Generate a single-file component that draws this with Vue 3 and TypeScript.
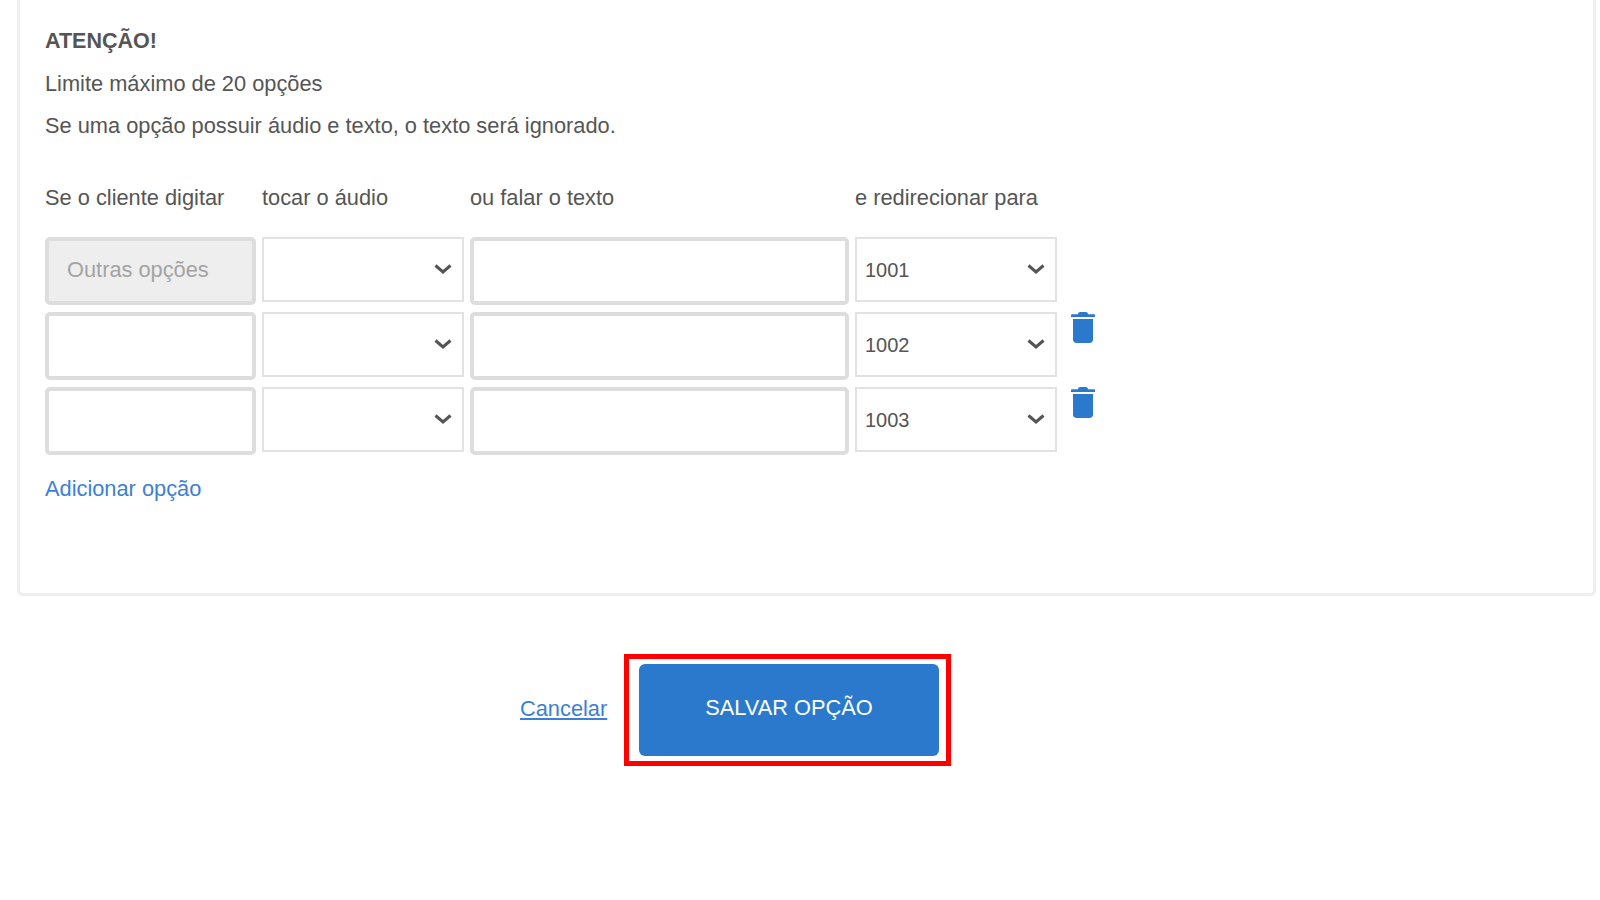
<script setup lang="ts">
interface OptionRow {
  key: string;
  target: string;
  locked: boolean;
}

const rows: OptionRow[] = [
  { key: 'Outras opções', target: '1001', locked: true },
  { key: '', target: '1002', locked: false },
  { key: '', target: '1003', locked: false },
];
</script>

<template>
  <div class="page">
    <section class="panel">
      <h2 class="title">ATENÇÃO!</h2>
      <p class="note">Limite máximo de 20 opções</p>
      <p class="note">Se uma opção possuir áudio e texto, o texto será ignorado.</p>

      <div class="grid">
        <span class="head">Se o cliente digitar</span>
        <span class="head">tocar o áudio</span>
        <span class="head">ou falar o texto</span>
        <span class="head">e redirecionar para</span>
        <span></span>

        <template v-for="row in rows" :key="row.target">
          <input class="field" :class="{ locked: row.locked }" :value="row.key" :disabled="row.locked" type="text" />
          <div class="select">
            <svg class="chevron" viewBox="0 0 18 10" width="18" height="10" aria-hidden="true">
              <path d="M1.500 1.500 9 8l7.500-6.500" fill="none" stroke="#555" stroke-width="3" />
            </svg>
          </div>
          <input class="field" type="text" />
          <div class="select">
            <span class="value">{{ row.target }}</span>
            <svg class="chevron" viewBox="0 0 18 10" width="18" height="10" aria-hidden="true">
              <path d="M1.500 1.500 9 8l7.500-6.500" fill="none" stroke="#555" stroke-width="3" />
            </svg>
          </div>
          <div class="action">
            <svg v-if="!row.locked" class="trash" viewBox="0 0 24 31" width="24" height="31" aria-hidden="true">
              <path d="M7 2.200C7 .8 8 0 9.500 0h5C16 0 17 .8 17 2.200h6c.6 0 1 .4 1 .9v1.900H0V3.100c0-.5.4-.9 1-.9z" fill="#2b79cd" />
              <path d="M2 7h20v20.500c0 2-1.500 3.500-3.500 3.500h-13C3.500 31 2 29.500 2 27.500z" fill="#2b79cd" />
            </svg>
          </div>
        </template>
      </div>

      <a class="add" href="#">Adicionar opção</a>
    </section>

    <footer class="footer">
      <a class="cancel" href="#">Cancelar</a>
      <div class="highlight">
        <button class="save" type="button">SALVAR OPÇÃO</button>
      </div>
    </footer>
  </div>
</template>

<style>
body {
  background: #fff;
}
</style>

<style scoped>
.page {
  width: 1600px;
  height: 900px;
  overflow: hidden;
  font-family: "Liberation Sans", Arial, sans-serif;
  font-size: 21.8px;
  color: #555;
}

.panel {
  box-sizing: border-box;
  margin: 0 4px 0 17px;
  height: 596px;
  padding: 26px 0 0 25px;
  border: 3px solid #eeeeee;
  border-top: 0;
  border-radius: 0 0 6px 6px;
}

.title {
  margin: 0 0 13px;
  font-size: 21.5px;
  line-height: 30px;
  font-weight: 700;
  color: #555;
}

.note {
  margin: 0 0 12px;
  line-height: 30px;
}

.grid {
  display: grid;
  grid-template-columns: 211px 202px 379px 202px 40px;
  grid-template-rows: 47px 68px 68px 68px;
  column-gap: 6px;
  row-gap: 7px;
  align-items: start;
  margin-top: 42px;
}

.head {
  line-height: 30px;
  white-space: nowrap;
}

.field {
  box-sizing: border-box;
  width: 100%;
  height: 68px;
  margin: 0;
  padding: 0 18px 2px;
  border: 4px solid #dddddd;
  border-radius: 5px;
  background: #fff;
  font: inherit;
  color: #555;
  outline: none;
}

.field.locked {
  background: #eeeeee;
  color: #a3a3a3;
  -webkit-text-fill-color: #a3a3a3;
  opacity: 1;
}

.select {
  position: relative;
  box-sizing: border-box;
  height: 65px;
  padding-left: 8px;
  display: flex;
  align-items: center;
  border: 2px solid #e2e2e2;
  background: #fff;
}

.value {
  font-size: 20px;
  line-height: 30px;
}

.chevron {
  position: absolute;
  right: 10px;
  top: 25px;
}

.action {
  padding-left: 8px;
}

.trash {
  display: block;
}

.add {
  display: block;
  width: max-content;
  margin-top: 19px;
  line-height: 30px;
  color: #3d7fd6;
  text-decoration: none;
}

.footer {
  display: flex;
  align-items: center;
  margin-top: 58px;
  padding-left: 520px;
}

.cancel {
  width: 104px;
  margin-bottom: 2px;
  color: #3d7fd6;
  text-decoration: underline;
  line-height: 30px;
}

.highlight {
  box-sizing: border-box;
  width: 327px;
  height: 112px;
  padding: 5px 7px 5px 10px;
  border: 5px solid #ff0000;
}

.save {
  display: block;
  width: 100%;
  height: 92px;
  border: 0;
  border-radius: 6px;
  background: #2b79cd;
  color: #fff;
  font: inherit;
  padding: 0 0 4px;
}
</style>
